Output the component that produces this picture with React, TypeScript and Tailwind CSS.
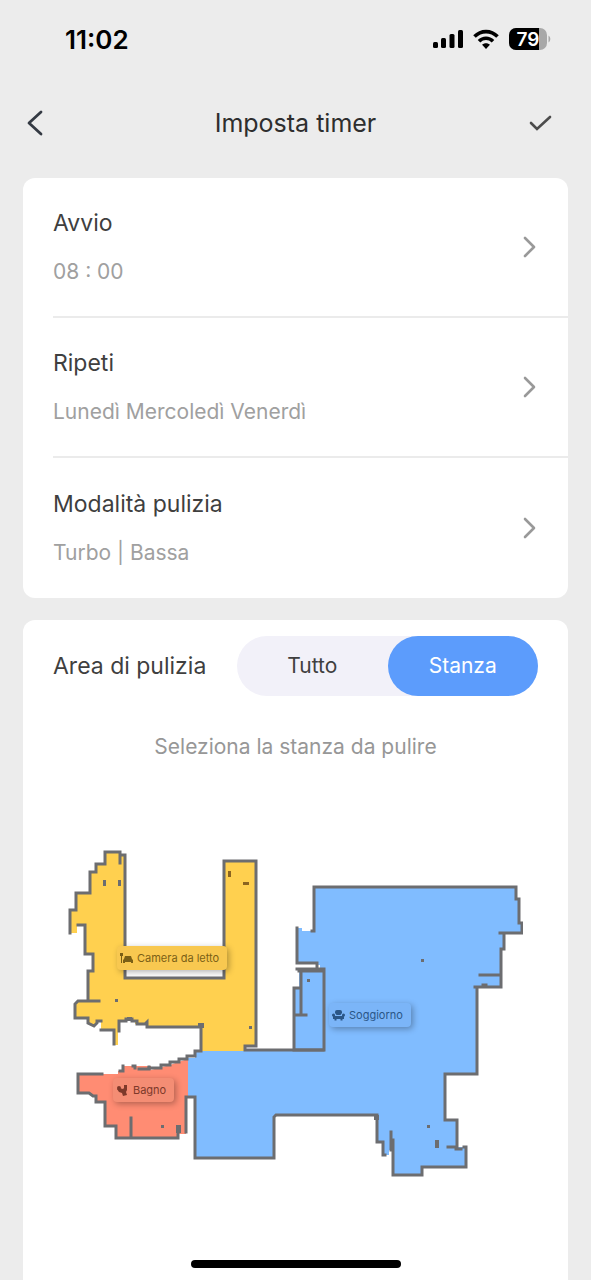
import React, { useState } from 'react';

const settings = [
  { label: 'Avvio', value: '08 : 00' },
  { label: 'Ripeti', value: 'Lunedì Mercoledì Venerdì' },
  { label: 'Modalità pulizia', value: 'Turbo | Bassa' },
];

const areas = ['Tutto', 'Stanza'];

const StatusBar: React.FC = () => (
  <div className="flex h-[78px] items-center justify-between pr-10 pl-[65px]">
    <span className="pt-0.5 text-[26px] leading-8 font-semibold text-black">11:02</span>
    <div className="flex items-center gap-[10px]">
      <svg className="h-5 w-[30px]" viewBox="0 0 30 20" fill="#000" aria-hidden="true">
        <rect x="0" y="13" width="5" height="6" rx="1.5" />
        <rect x="8" y="9" width="5" height="10" rx="1.5" />
        <rect x="16.5" y="5" width="5" height="14" rx="1.5" />
        <rect x="25" y="1" width="5" height="18" rx="1.5" />
      </svg>
      <svg className="h-5 w-[26px]" viewBox="0 0 26 20" fill="none" stroke="#000" strokeWidth="3.6" aria-hidden="true">
        <path d="M1.5 7.6C8 .9 18 .9 24.5 7.6" />
        <path d="M6 12.2c4-4 10-4 14 0" />
        <path d="M13 20l-3.9-4.2c2.2-2 5.6-2 7.8 0z" fill="#000" stroke="none" />
      </svg>
      <svg className="h-[22px] w-[42px]" viewBox="0 0 42 22" role="img" aria-label="79%">
        <defs>
          <clipPath id="battery">
            <rect x="0" y="0" width="38" height="22" rx="7" />
          </clipPath>
        </defs>
        <g clipPath="url(#battery)">
          <rect width="38" height="22" fill="#a8a8a8" />
          <rect width="30" height="22" fill="#000" />
        </g>
        <path d="M39.5 7.5c2.4 1.4 2.4 5.6 0 7z" fill="#a8a8a8" />
        <text x="19" y="18" textAnchor="middle" fontSize="19" fontWeight="600" fill="#fff">79</text>
      </svg>
    </div>
  </div>
);

const Header: React.FC = () => (
  <header className="flex h-[100px] items-start justify-between pt-[25px] pr-[39px] pl-[23px]">
    <button type="button" aria-label="Indietro" className="flex h-10 w-10 items-center">
      <svg className="h-7 w-6" viewBox="0 0 24 28" fill="none" stroke="#343a43" strokeWidth="2.8" strokeLinecap="round" strokeLinejoin="round">
        <path d="M18 3L6 14l12 11" />
      </svg>
    </button>
    <h1 className="text-[25px] leading-10 text-[#2e2e2e]">Imposta timer</h1>
    <button type="button" aria-label="Conferma" className="flex h-10 w-6 items-center">
      <svg className="h-5 w-6" viewBox="0 0 24 20" fill="none" stroke="#4c4c4c" strokeWidth="2.6" strokeLinecap="round">
        <path d="M3 10l6 6L22 4" />
      </svg>
    </button>
  </header>
);

const SettingsCard: React.FC = () => (
  <section className="mx-[23px] rounded-xl bg-white pl-[30px]">
    {settings.map((item, index) => (
      <button
        key={item.label}
        type="button"
        className={`flex h-[140px] w-full items-center justify-between pr-[31px] text-left ${
          index < settings.length - 1 ? 'border-b-2 border-[#ebebeb]' : ''
        }`}
      >
        <span className="flex flex-col gap-[21px]">
          <span className="text-[23px] leading-7 text-[#3f3f3f]">{item.label}</span>
          <span className="text-[21px] leading-7 text-[#a0a0a0]">{item.value}</span>
        </span>
        <svg className="h-6 w-4" viewBox="0 0 16 24" fill="none" stroke="#999" strokeWidth="2.6" strokeLinecap="round" strokeLinejoin="round">
          <path d="M4 3l9 9-9 9" />
        </svg>
      </button>
    ))}
  </section>
);

const BedIcon = () => (
  <svg className="h-3 w-[13px]" viewBox="0 0 13 12" fill="currentColor" aria-hidden="true">
    <path d="M0 1h3v3H2v7H1V4H0z" />
    <path d="M5 4h6l1 3 1 1v3h-2v-1H5v1H3V8l1-1z" />
  </svg>
);

const ToiletIcon = () => (
  <svg className="h-3 w-[13px]" viewBox="0 0 13 12" fill="currentColor" aria-hidden="true">
    <path d="M8 1h3v5l-1 2 1 3-4 1-1-3-3-1-2-3 2-1 4 1 1-1z" />
    <circle cx="3" cy="4" r="2" />
  </svg>
);

const ArmchairIcon = () => (
  <svg className="h-3 w-[13px]" viewBox="0 0 13 12" fill="currentColor" aria-hidden="true">
    <path d="M3 3a2 2 0 012-2h3a2 2 0 012 2v1L8.500 6h-4L3 4z" />
    <path d="M0 6a1.500 1.500 0 013 0v1h7V6a1.500 1.500 0 013 0c0 1-.6 1.400-1 1.800V10h-1.500v1.500h-2V10h-4v1.500h-2V10H1V7.800C.6 7.400 0 7 0 6z" />
  </svg>
);

const rooms = [
  {
    name: 'Camera da letto',
    Icon: BedIcon,
    className: 'left-[49px] top-[98px] bg-[#f8c850] text-[#7b6016]',
  },
  {
    name: 'Soggiorno',
    Icon: ArmchairIcon,
    className: 'left-[261px] top-[155px] bg-[#7bb5f8] text-[#2a5687]',
  },
  {
    name: 'Bagno',
    Icon: ToiletIcon,
    className: 'left-[45px] top-[230px] bg-[#f48d74] text-[#7d392a]',
  },
];

const FloorPlan: React.FC = () => (
  <div className="relative mx-auto mt-[87px] h-[332px] w-[455px]">
    <svg className="h-full w-full" viewBox="68 848 455 332" aria-hidden="true">
      {/* room fills */}
      <path
        fill="#ffd04f"
        d="M105 852H121V855H125V978H224V861H256V1046H245V1052H201V1027H148V1024H135V1020H119V1032H118V1045H113V1030H101V1022H98L93 1026 88 1024V1018H75V1004L78 1001H88V971H93V954H85V925H77V933H70V910H76V893H90V872H96V864H105z"
      />
      <path
        fill="#80bcff"
        d="M201 1051H294V988H299V970H320V965H317V963H297V928H302V931H314V887H516V899H519V923H522V933H504V949H501V987H477V1074H445V1120H456V1147H466V1167H422V1175H393V1150H389V1155H383V1142H377V1115H276L274 1117V1158H195V1097H188V1058H195V1051z"
      />
      <path
        fill="#ff8c73"
        d="M78 1074H118V1071H123V1066H151V1070L162 1067 170 1065 178 1062 188 1059V1097H186V1134H178V1138H116V1126H105V1102H96V1096H93L89 1093H78z"
      />
      {/* walls */}
      <g fill="none" stroke="#6c6d70" strokeWidth="3" strokeLinecap="square">
        <path d="M70 933v-23h6v-17h14v-21h6v-8h9v-12h15v11M122 855h3v123h99V861h32v185h-11v4h78" />
        <path d="M78 925h7v29h8v17h-5v30M99 1001H78l-3 3v14h13v5l6 3 3-3v-2h4M101 1030h13v14M119 1031v-10h7v-2h6v2h5v3h8l2-2v5h54v24h-6v5h-8v3h-8v3h-9v3h-9v3h-12" />
        <path d="M297 928v35h20v3M297 969h27M299 971h25v79h-30v-62h6M301 971v44M294 1015h12M312 931h2v-44h202v12h3v24h3v10h-22M504 935v14h-3v38h-26M480 975h21M483 985h3M477 989v85h-32v46h12v29M448 1147h8v2h5M464 1147h2v20h-44v8h-29v-35M391 1132v18M385 1155h-2v-13h-6v-27H276l-2 2v41h-79v-61h-9v35" />
        <path d="M102 1074H78v19h11l4 3h3v6h9v24h11v12h62v-4M131 1118v19M120 1071h3v-5M135 1068v-2h-2M139 1069h10v-2" />
      </g>
      {/* furniture and small obstacles */}
      <g fill="#6c6d70">
        <path d="M103 880h3v6h-3zM118 880h3v6h-3zM115 999h3v3h-3zM249 1026h3v3h-3zM198 1023h6v5h-6zM127 1017h5v4h-5zM374 1115h5v5h-5z" />
        <path d="M421 959h3v3h-3zM307 979h3v3h-3zM427 1125h3v3h-3zM435 1140h4v8h-4zM161 1125h3v3h-3zM176 1125h5v8h-5z" />
        <path fill="#8b6420" d="M228 871h3v6h-3zM243 882h6v3h-6z" />
      </g>
    </svg>
    {rooms.map(({ name, Icon, className }) => (
      <button
        key={name}
        type="button"
        className={`absolute flex h-6 items-center gap-1 rounded-sm pr-2 pl-[3px] text-[11px] leading-4 whitespace-nowrap shadow-[2px_2px_6px_rgba(0,0,0,0.3)] ${className}`}
      >
        <Icon />
        {name}
      </button>
    ))}
  </div>
);

const CleaningAreaCard: React.FC = () => {
  const [selected, setSelected] = useState('Stanza');

  return (
    <section className="mx-[23px] mt-[22px] flex flex-1 flex-col rounded-t-xl bg-white pt-4">
      <div className="flex items-center justify-between px-[30px]">
        <h2 className="text-[23px] leading-7 text-[#3f3f3f]">Area di pulizia</h2>
        <div className="flex h-[60px] w-[301px] rounded-full bg-[#f2f1f9]">
          {areas.map((area) => (
            <button
              key={area}
              type="button"
              aria-pressed={selected === area}
              onClick={() => setSelected(area)}
              className={`flex-1 rounded-full text-[21px] leading-7 ${
                selected === area ? 'bg-[#5c9cfc] text-white' : 'text-[#3f3f3f]'
              }`}
            >
              {area}
            </button>
          ))}
        </div>
      </div>
      <p className="mt-[37px] text-center text-[21px] leading-7 text-[#979797]">Seleziona la stanza da pulire</p>
      <FloorPlan />
      <div className="mx-auto mt-auto mb-3 h-2 w-[210px] rounded-full bg-black" />
    </section>
  );
};

const App: React.FC = () => (
  <main className="flex min-h-screen flex-col bg-[#ececec] font-['Inter','Liberation_Sans',sans-serif]">
    <StatusBar />
    <Header />
    <SettingsCard />
    <CleaningAreaCard />
  </main>
);

export default App;
